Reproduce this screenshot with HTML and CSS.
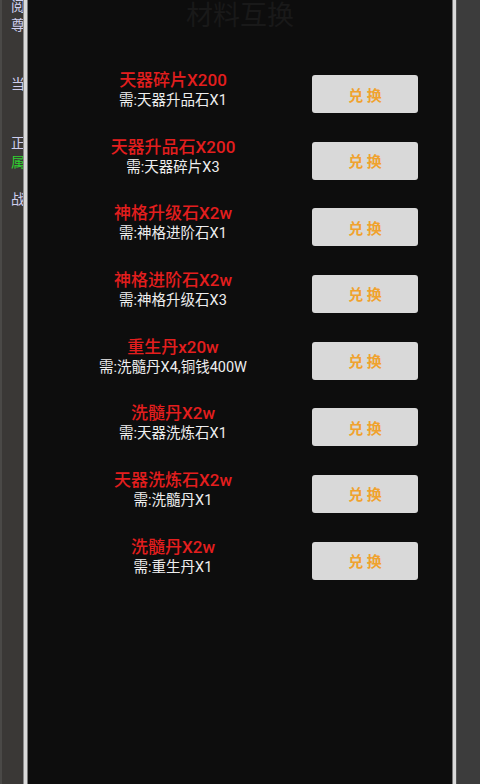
FILE: index.html
```html
<!DOCTYPE html>
<html lang="zh">
<head>
<meta charset="utf-8">
<title>材料互换</title>
<link rel="stylesheet" href="styles.css">
</head>
<body>
<div class="page">
  <aside class="side-left">
    <div class="sl sl-1">阅读</div>
    <div class="sl">尊贵</div>
    <div class="sl sl-3">当前</div>
    <div class="sl sl-4">正在</div>
    <div class="sl sl-green">属性</div>
    <div class="sl sl-6">战力</div>
  </aside>
  <main class="panel">
    <h1 class="title">材料互换</h1>
    <div class="list">
      <div class="row">
        <div class="info"><div class="name">天器碎片X200</div><div class="need">需:天器升品石X1</div></div>
        <button class="btn">兑 换</button>
      </div>
      <div class="row">
        <div class="info"><div class="name">天器升品石X200</div><div class="need">需:天器碎片X3</div></div>
        <button class="btn">兑 换</button>
      </div>
      <div class="row">
        <div class="info"><div class="name">神格升级石X2w</div><div class="need">需:神格进阶石X1</div></div>
        <button class="btn">兑 换</button>
      </div>
      <div class="row">
        <div class="info"><div class="name">神格进阶石X2w</div><div class="need">需:神格升级石X3</div></div>
        <button class="btn">兑 换</button>
      </div>
      <div class="row">
        <div class="info"><div class="name">重生丹x20w</div><div class="need">需:洗髓丹X4,铜钱400W</div></div>
        <button class="btn">兑 换</button>
      </div>
      <div class="row">
        <div class="info"><div class="name">洗髓丹X2w</div><div class="need">需:天器洗炼石X1</div></div>
        <button class="btn">兑 换</button>
      </div>
      <div class="row">
        <div class="info"><div class="name">天器洗炼石X2w</div><div class="need">需:洗髓丹X1</div></div>
        <button class="btn">兑 换</button>
      </div>
      <div class="row">
        <div class="info"><div class="name">洗髓丹X2w</div><div class="need">需:重生丹X1</div></div>
        <button class="btn">兑 换</button>
      </div>
    </div>
  </main>
  <aside class="side-right"></aside>
</div>
</body>
</html>
```

FILE: styles.css
```css
* { box-sizing: border-box; }
html, body {
  margin: 0;
  padding: 0;
  width: 480px;
  height: 784px;
  overflow: hidden;
  background: #3b3a38;
  font-family: Roboto, "Noto Sans CJK SC", "Noto Sans", sans-serif;
}
.page {
  display: flex;
  width: 480px;
  height: 784px;
}
.side-left {
  width: 24px;
  flex: none;
  background: #3a3836;
  border-left: 2px solid #4a4947;
  padding-left: 9px;
  overflow: hidden;
  white-space: nowrap;
  color: #cfcfee;
  font-size: 14px;
  line-height: 19px;
}
.sl { height: 19px; }
.sl-1 { margin-top: -3px; }
.sl-3 { margin-top: 40px; }
.sl-4 { margin-top: 40px; }
.sl-green { color: #2fd12f; }
.sl-6 { margin-top: 18px; }

.panel {
  width: 432px;
  flex: none;
  background: #0d0d0d;
  border-left: 3px solid #d9d9d9;
  border-right: 3px solid #d9d9d9;
  box-shadow: -1px 0 0 #8a8a8a, 1px 0 0 #8a8a8a, inset 1px 0 0 #777, inset -1px 0 0 #777;
  display: flex;
  flex-direction: column;
}
.title {
  margin: 0;
  font-size: 27px;
  line-height: 32px;
  font-weight: normal;
  color: #191919;
  text-align: center;
}
.list {
  margin-top: 36px;
  display: flex;
  flex-direction: column;
}
.row {
  display: flex;
  align-items: flex-start;
  height: 66.67px;
}
.info {
  width: 268px;
  margin-left: 12px;
  text-align: center;
}
.name {
  color: #e31e1e;
  font-size: 17px;
  line-height: 24px;
  font-weight: 500;
}
.need {
  color: #eeeeee;
  font-size: 14.5px;
  line-height: 18px;
}
.btn {
  margin-top: 7px;
  margin-left: 5px;
  width: 106px;
  height: 38px;
  border: none;
  border-radius: 3px;
  background: #d9d9d9;
  color: #f0a22e;
  font-family: Roboto, "Noto Sans CJK SC", "Noto Sans", sans-serif;
  font-size: 15px;
  font-weight: bold;
  padding: 0;
}
.side-right {
  flex: 1;
  background: #3c3c3c;
  border-left: 1px solid #555;
}
```
